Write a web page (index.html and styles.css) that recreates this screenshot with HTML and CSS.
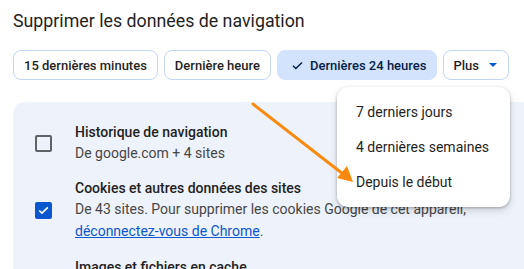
FILE: index.html
```html
<!DOCTYPE html>
<html lang="fr">
<head>
<meta charset="utf-8">
<link rel="stylesheet" href="styles.css">
</head>
<body>
<div class="page">
  <h1 class="title">Supprimer les données de navigation</h1>
  <div class="chips">
    <button class="chip">15 dernières minutes</button>
    <button class="chip">Dernière heure</button>
    <button class="chip chip-selected"><svg class="check" viewBox="0 0 12 10" width="11" height="9"><path d="M1 5.2 L4.2 8.4 L11 1.6" fill="none" stroke="#041e49" stroke-width="1.6"/></svg>Dernières 24 heures</button>
    <button class="chip chip-more">Plus<span class="caret"></span></button>
  </div>
  <div class="panel">
    <div class="row">
      <span class="box"></span>
      <div class="row-text">
        <div class="row-title">Historique de navigation</div>
        <div class="row-sub">De google.com + 4 sites</div>
      </div>
    </div>
    <div class="row row-cookies">
      <span class="box box-checked"><svg viewBox="0 0 12 10" width="11" height="9"><path d="M1.2 5 L4.3 8 L10.8 1.6" fill="none" stroke="#fff" stroke-width="1.8"/></svg></span>
      <div class="row-text">
        <div class="row-title">Cookies et autres données des sites</div>
        <div class="row-sub">De 43 sites. Pour supprimer les cookies Google de cet appareil, <a class="link" href="#">déconnectez-vous de Chrome</a>.</div>
      </div>
    </div>
    <div class="row row-cache">
      <span class="box"></span>
      <div class="row-text">
        <div class="row-title">Images et fichiers en cache</div>
      </div>
    </div>
  </div>
  <div class="menu">
    <div class="menu-item">7 derniers jours</div>
    <div class="menu-item">4 dernières semaines</div>
    <div class="menu-item">Depuis le début</div>
  </div>
  <svg class="arrow" width="524" height="269" viewBox="0 0 524 269">
    <line x1="253" y1="104" x2="343" y2="174" stroke="#f98a0f" stroke-width="3" stroke-linecap="round"/>
    <polygon points="353,182 337,178 347,166" fill="#f98a0f"/>
  </svg>
</div>
</body>
</html>
```
FILE: styles.css
```css
* { box-sizing: border-box; }
html, body { margin: 0; padding: 0; background: #fff; }
body {
  font-family: Roboto, "Noto Sans", Arial, sans-serif;
  color: #1f1f1f;
  width: 524px;
  height: 269px;
  overflow: hidden;
}
.page {
  position: relative;
  padding: 10px 0 0 13px;
  height: 269px;
}
.title {
  margin: 0;
  font-size: 17.8px;
  line-height: 22px;
  font-weight: 400;
  color: #1f1f1f;
}
.chips {
  display: flex;
  gap: 6px;
  margin-top: 18px;
}
.chip {
  display: inline-flex;
  align-items: center;
  height: 30px;
  padding: 0 10px;
  border: 1px solid #c3d6f6;
  border-radius: 8px;
  background: #fff;
  font-family: inherit;
  font-size: 13px;
  font-weight: 500;
  color: #1f1f1f;
  white-space: nowrap;
}
.chip-selected {
  background: #d3e3fd;
  border-color: #d3e3fd;
  color: #041e49;
  padding: 0 10px 0 14px;
}
.check { margin-right: 7px; }
.chip-more { padding: 0 11px 0 9px; }
.caret {
  display: inline-block;
  width: 0; height: 0;
  margin-left: 10px;
  border-left: 4px solid transparent;
  border-right: 4px solid transparent;
  border-top: 4px solid #0b57d0;
}
.panel {
  margin-top: 22px;
  background: #eef2fa;
  border-radius: 12px 0 0 0;
  padding: 20px 0 0 22px;
  height: 200px;
}
.row {
  display: flex;
  align-items: center;
}
.row-cookies { margin-top: 14px; align-items: flex-start; }
.row-cache { margin-top: 15px; align-items: flex-start; }
.box {
  flex: none;
  width: 17px;
  height: 17px;
  border: 2px solid #5f6368;
  border-radius: 2px;
  margin-right: 23px;
  display: flex;
  align-items: center;
  justify-content: center;
}
.row-cookies .box { margin-top: 24px; }
.row-cache .box { margin-top: 20px; visibility: hidden; }
.box-checked {
  background: #0b57d0;
  border-color: #0b57d0;
}
.row-title {
  font-size: 14px;
  font-weight: 500;
  line-height: 20px;
  color: #1f1f1f;
}
.row-sub {
  font-size: 14px;
  line-height: 22px;
  color: #474747;
  width: 420px;
}
.link { color: #0b57d0; text-decoration: underline; }
.menu {
  position: absolute;
  left: 337px;
  top: 87px;
  width: 173px;
  height: 120px;
  background: #fff;
  border-radius: 11px;
  box-shadow: 0 1px 3px rgba(0,0,0,0.28), 0 4px 8px rgba(0,0,0,0.12);
  padding: 8px 0;
}
.menu-item {
  height: 35px;
  line-height: 35px;
  padding-left: 19px;
  font-size: 14px;
  color: #1f1f1f;
}
.arrow {
  position: absolute;
  left: 0;
  top: 0;
  pointer-events: none;
}
```
